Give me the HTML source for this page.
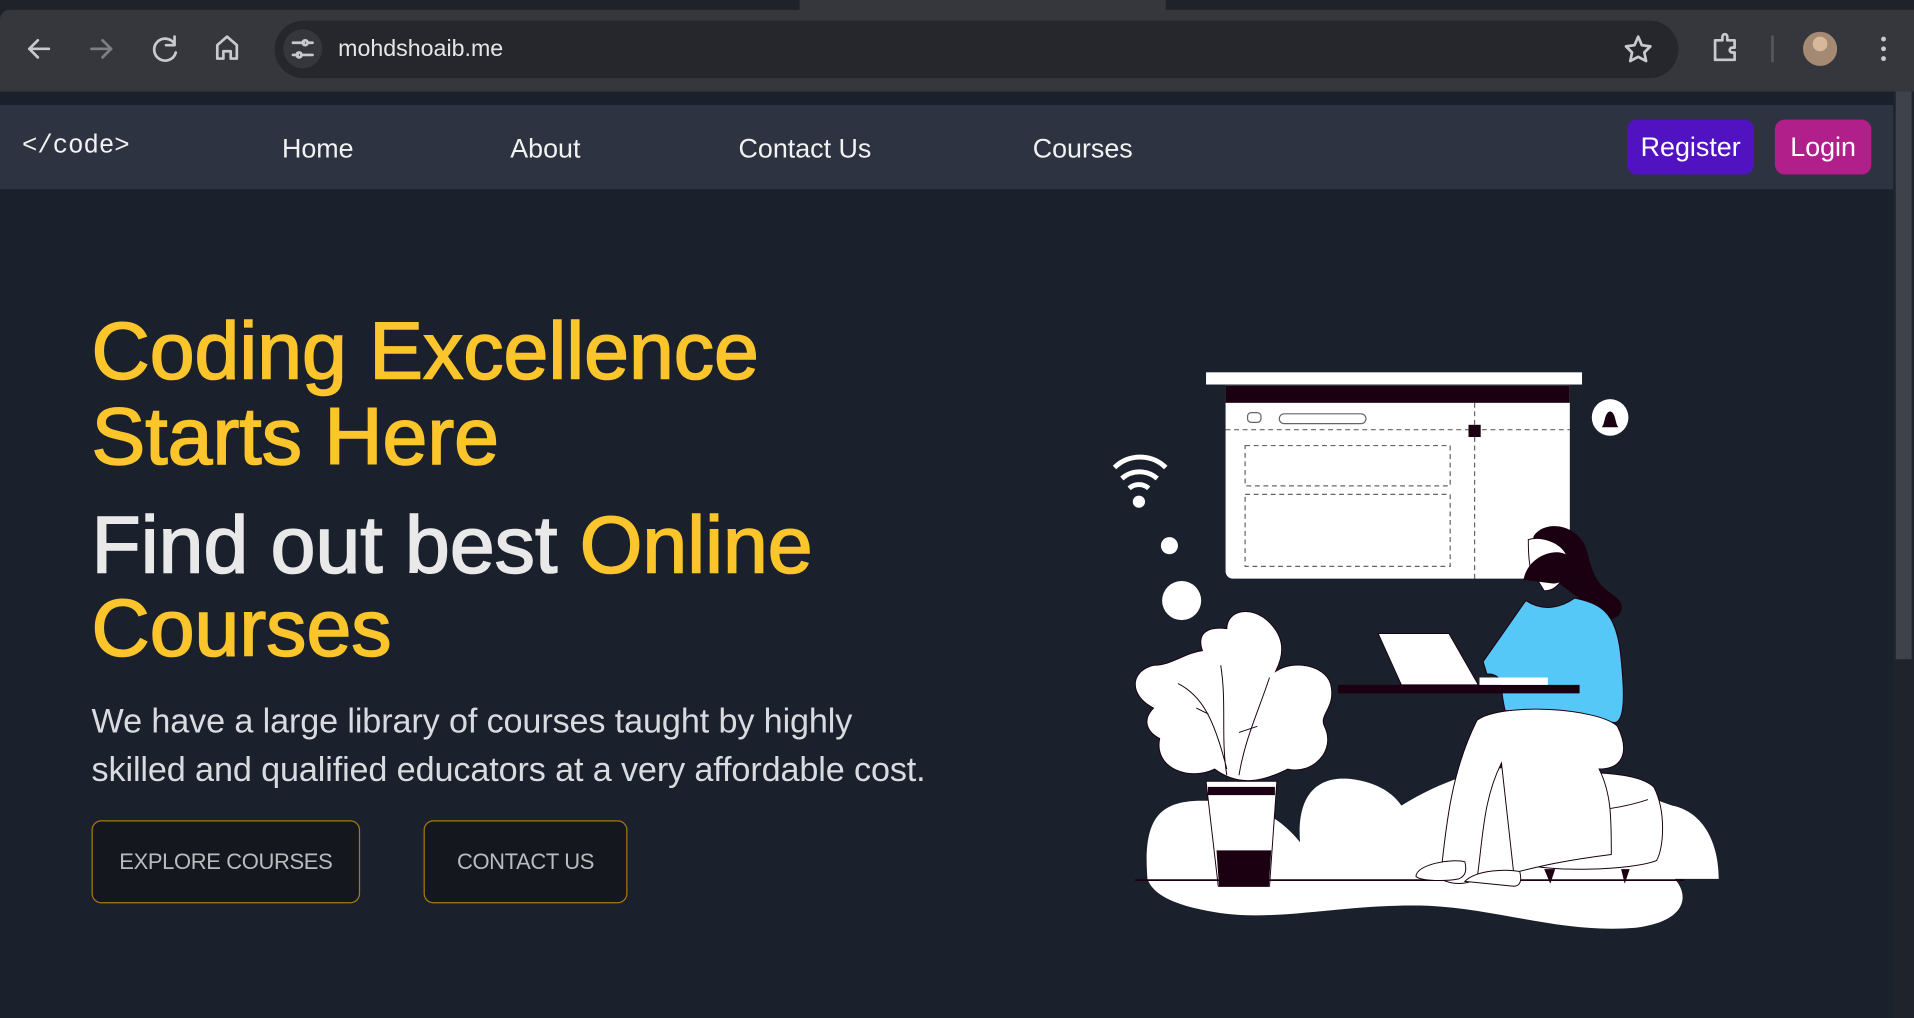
<!DOCTYPE html>
<html><head><meta charset="utf-8"><style>
*{margin:0;padding:0;box-sizing:border-box}
html,body{width:1914px;height:1018px;overflow:hidden;background:#1b212c;font-family:"Liberation Sans",sans-serif}
#w{position:absolute;left:0;top:0;width:1568px;height:834px;transform:scale(1.2207);transform-origin:0 0}
.a{position:absolute}
.tabs{left:0;top:0;width:1568px;height:8px;background:#1f2228}
.tool{left:0;top:8px;width:1568px;height:67px;background:#35373d;border-top-left-radius:8px}
.tabcut{left:655px;top:0;width:300px;height:9px;background:#35373d}
.addr{left:225px;top:17px;width:1150px;height:47px;border-radius:24px;background:#25272c}
.url{left:277px;top:30px;color:#e6e6e6;font-size:19px}
.nav{left:0;top:86px;width:1551px;height:69px;background:#2d3341}
.nl{color:#f2f2f2;font-size:22px;top:109px}
.btn{top:98px;height:45px;border-radius:8px;color:#fff;font-size:22px;line-height:45px;text-align:center}
h1{position:absolute;left:75px;top:252px;font-size:66px;line-height:70px;font-weight:normal;color:#fbc52b;-webkit-text-stroke:1.3px #fbc52b}
h2{position:absolute;left:75px;top:412px;font-size:66px;line-height:68px;font-weight:normal;color:#e9e9e9;-webkit-text-stroke:1.3px #e9e9e9}
h2 span{color:#fbc52b;-webkit-text-stroke:1.3px #fbc52b}
p{position:absolute;left:75px;top:571px;font-size:28px;line-height:40px;color:#d9dbe0;letter-spacing:-0.1px}
.ob{top:672px;height:68px;border:1px solid #a9780f;border-radius:8px;background:#14181e;color:#b9bbbf;font-size:18px;line-height:66px;text-align:center;letter-spacing:-0.3px}
.sb{left:1551px;top:75px;width:17px;height:759px;background:#1f242c}
.sbt{left:1553px;top:75px;width:13px;height:465px;background:#3e434b}
</style></head><body><div id="w">
<div class="a tabs"></div><div class="a tabcut"></div><div class="a tool"></div>
<div class="a addr"></div>
<svg class="a" style="left:0;top:8px" width="1568" height="67" viewBox="0 8 1568 67" fill="none" stroke="#c8cace" stroke-width="2.2" stroke-linecap="round" stroke-linejoin="round">
<path d="M40 40H24M31 33l-7 7 7 7"/>
<path d="M75 40h16M84 33l7 7-7 7" stroke="#7d7f84"/>
<path d="M143 36a9 9 0 1 0 1 7M143 30v7h-7"/>
<path d="M178 48V37l8-7 8 7v11h-5v-6h-6v6z"/>
<circle cx="248" cy="40" r="16" fill="#35373d" stroke="none"/>
<path d="M240 35h9M252 35h4M240 45h4M247 45h9"/><circle cx="250" cy="35" r="2"/><circle cx="245" cy="45" r="2"/>
<path d="M1342 30l3 7 7 1-5 5 1.5 7-6.5-3.5-6.5 3.5 1.5-7-5-5 7-1z"/>
<path d="M1405 33h6v-3a2 2 0 0 1 4 0v3h6v6h-2a2 2 0 0 0 0 4h2v6h-16z"/>
<path d="M1452 30v20" stroke="#55575c"/>
<circle cx="1491" cy="40" r="14" fill="#a48a73" stroke="none"/><circle cx="1491" cy="36" r="6" fill="#d8b89a" stroke="none"/>
<g fill="#c8cace" stroke="none"><circle cx="1543" cy="32" r="2"/><circle cx="1543" cy="40" r="2"/><circle cx="1543" cy="48" r="2"/></g>
</svg>
<div class="a url">mohdshoaib.me</div>
<div class="a nav"></div>
<div class="a nl" style="left:18px;font-family:'Liberation Mono',monospace;font-size:21px;top:109px">&lt;/code&gt;</div>
<div class="a nl" style="left:231px">Home</div>
<div class="a nl" style="left:418px">About</div>
<div class="a nl" style="left:605px">Contact Us</div>
<div class="a nl" style="left:846px">Courses</div>
<div class="a btn" style="left:1333px;width:104px;background:#5113c2">Register</div>
<div class="a btn" style="left:1454px;width:79px;background:#b11f8a">Login</div>
<div class="a sb"></div><div class="a sbt"></div>
<h1>Coding Excellence<br>Starts Here</h1>
<h2>Find out best <span>Online<br>Courses</span></h2>
<p>We have a large library of courses taught by highly<br>skilled and qualified educators at a very affordable cost.</p>
<div class="a ob" style="left:75px;width:220px">EXPLORE COURSES</div>
<div class="a ob" style="left:347px;width:167px">CONTACT US</div>
<svg class="a" style="left:0;top:0" width="1568" height="834" viewBox="0 0 1568 834">
<path d="M940 720C936 670 950 656 985 656C1020 656 1045 665 1065 690C1062 650 1080 636 1105 638C1125 640 1140 648 1148 660C1180 640 1215 628 1250 628C1300 628 1340 650 1370 660C1395 665 1408 690 1408 720H1372C1385 735 1380 755 1340 760C1280 765 1230 745 1170 742C1100 740 1050 755 1000 748C960 742 944 732 940 720Z" fill="#fff"/>
<g fill="#fff" stroke="#1a0010" stroke-width="0.8">
<path d="M945 580c-20-10-20-30 0-35 15 0 25-10 40-12-5-15 5-20 20-18 0-15 20-20 35-5 15 15 10 30 5 40 15-10 40-5 45 10 5 20-10 25-5 35 10 20-10 40-30 35-20 10-40 15-60 0-20 10-50 0-45-25-10-5-15-15-5-25z"/>
<path d="M965 560c20 10 30 30 40 70M1000 545c5 30 0 60 5 90M1040 555c-10 30-20 50-25 80M980 580l10 5M1015 600l15-5" fill="none"/>
<path d="M988 640h58l-6 86h-42z"/><path d="M990 645h54v6h-54z" fill="#1a0010"/><path d="M997 697h44l-2 29h-40z" fill="#1a0010"/>
<path d="M930 721h450" stroke="#1a0010" stroke-width="1.5"/>
<path d="M1250 640c30-10 90-10 105 5 10 20 8 50 2 60-20 8-90 10-110 2-8-20-8-50 3-67z"/>
<path d="M1250 660c30 8 70 5 100-5" fill="none"/>
</g>
<path d="M1265 712l5 12 4-12zM1328 712l3 12 4-12z" fill="#1a0010"/>
<rect x="988" y="305" width="308" height="10" fill="#fff"/>
<path d="M1004 316h282v152a6 6 0 0 1-6 6h-270a6 6 0 0 1-6-6z" fill="#fff"/>
<rect x="1004" y="316" width="282" height="14" fill="#1a0010"/>
<g fill="none" stroke="#666" stroke-width="1">
<rect x="1022" y="338" width="11" height="8" rx="3"/><rect x="1048" y="339" width="71" height="8" rx="4"/>
<g stroke-dasharray="4 3"><path d="M1004 352h282M1208 330v144"/><rect x="1020" y="365" width="168" height="33"/><rect x="1020" y="405" width="168" height="59"/></g>
</g>
<rect x="1203" y="348" width="10" height="10" fill="#1a0010"/>
<circle cx="1319" cy="342" r="15" fill="#fff"/><path d="M1312 350c3-2 2-12 7-13 5 1 4 11 7 13z" fill="#1a0010"/>
<g fill="none" stroke="#fff" stroke-width="4"><path d="M913 383a30 30 0 0 1 42 0M919 392a22 22 0 0 1 29 0M925 400a12 12 0 0 1 16 0"/></g>
<circle cx="933" cy="411" r="5" fill="#fff"/><circle cx="958" cy="447" r="7" fill="#fff"/><circle cx="968" cy="492" r="16" fill="#fff"/>
<path d="M1256 440c8-15 40-12 45 15 5 20 10 25 20 32 15 10 5 22-5 20l-40-30z" fill="#1a0010"/>
<path d="M1252 442c0 10 0 30 8 34l5 8c15 0 20-20 18-30-5-10-20-15-31-12z" fill="#fff" stroke="#1a0010" stroke-width=".8"/>
<path d="M1248 475c5-25 38-28 38-15 3 10-5 18-14 18z" fill="#1a0010"/>
<path d="M1250 492c15 10 30 5 40-2 25 5 35 15 38 50 3 30 3 50-5 52l-90-10c-5-20 0-30-15-30l-3-10z" fill="#56c8f8" stroke="#1a0010" stroke-width=".8"/>
<path d="M1210 590c20-15 100-10 115 5 10 20 5 35-15 35 10 20 10 40 10 70-40 5-60 10-80 15l-10-90c-15 30-15 60-20 95-10 5-20 5-30 0 5-50 10-90 30-130z" fill="#fff" stroke="#1a0010" stroke-width=".8"/>
<path d="M1160 718c0-10 30-15 40-12 2 8 0 12-5 14-10 2-30 2-35-2zM1200 722c10-10 35-10 45-8 2 8 0 12-5 12z" fill="#fff" stroke="#1a0010" stroke-width=".8"/>
<path d="M1096 561h198v7h-198z" fill="#1a0010"/>
<path d="M1129 519h58l24 42h-63z" fill="#fff" stroke="#1a0010" stroke-width=".8"/>
<path d="M1212 555h56v6h-56z" fill="#fff"/>
</svg>
</div></body></html>
